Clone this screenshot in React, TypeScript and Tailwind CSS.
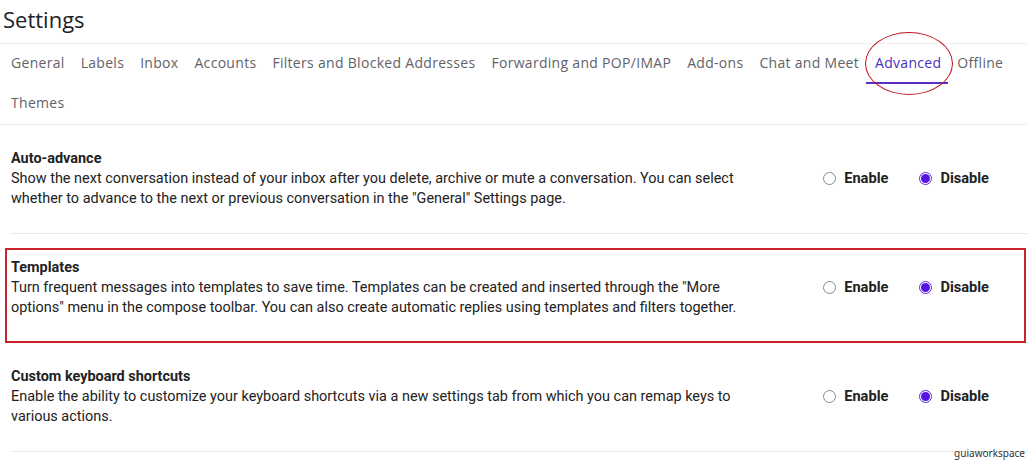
import React from "react";

const tabs = [
  "General",
  "Labels",
  "Inbox",
  "Accounts",
  "Filters and Blocked Addresses",
  "Forwarding and POP/IMAP",
  "Add-ons",
  "Chat and Meet",
  "Advanced",
  "Offline",
  "Themes",
];

function Radio({ checked }: { checked: boolean }) {
  return checked ? (
    <span className="flex h-[13px] w-[13px] items-center justify-center rounded-full border border-[#5b2bd9] bg-white">
      <span className="h-[9px] w-[9px] rounded-full bg-[#5514e0]" />
    </span>
  ) : (
    <span className="h-[13px] w-[13px] rounded-full border border-[#8a8a8a] bg-white" />
  );
}

function Options() {
  return (
    <div className="flex items-center pr-[39px] text-[14.6px] font-bold text-[#222]">
      <Radio checked={false} />
      <span className="ml-[8px]">Enable</span>
      <span className="ml-[31px]">
        <Radio checked={true} />
      </span>
      <span className="ml-[8px]">Disable</span>
    </div>
  );
}

function Section({
  title,
  lines,
  highlight,
}: {
  title: string;
  lines: string[];
  highlight?: boolean;
}) {
  return (
    <div className="relative ml-[11px] flex h-[109px] items-center justify-between border-b border-[#e6e6e6]">
      <div className="pb-[1px] text-[14.45px] leading-[20px] text-[#222]">
        <div className="font-bold">{title}</div>
        {lines.map((l) => (
          <div key={l}>{l}</div>
        ))}
      </div>
      <Options />
      {highlight && (
        <div className="pointer-events-none absolute left-[-6px] top-[14px] h-[95px] w-[1021px] border-2 border-[#c8242b]" />
      )}
    </div>
  );
}

export default function App() {
  return (
    <div
      className="relative h-[460px] w-[1028px] overflow-hidden bg-white"
      style={{ fontFamily: "Roboto, 'Liberation Sans', sans-serif" }}
    >
      <div className="h-[44px] border-b border-[#eeeeee] pl-[3px]">
        <div
          className="pt-[5px] text-[22px] leading-[28px] text-[#202124]"
          style={{ fontFamily: "'Open Sans', sans-serif" }}
        >
          Settings
        </div>
      </div>
      <div
        className="flex flex-wrap gap-x-[16px] border-b border-[#eeeeee] pl-[11px] pr-[10px] text-[14px] tracking-[0.3px] text-[#5f6368]"
        style={{ fontFamily: "'Open Sans', sans-serif" }}
      >
        {tabs.map((t) => (
          <div key={t} className="relative flex h-[40px] items-center pb-[3px]">
            {t === "Advanced" ? (
              <>
                <span className="text-[#4a2fc0]">{t}</span>
                <span className="absolute bottom-[0px] left-[-9px] right-[-7px] h-[2px] bg-[#5a30c4]" />
                <span className="absolute left-[-10px] top-[-12px] h-[63px] w-[88px] rounded-[50%] border-[1.5px] border-[#c0141c]" />
              </>
            ) : (
              <span>{t}</span>
            )}
          </div>
        ))}
      </div>
      <Section
        title="Auto-advance"
        lines={[
          "Show the next conversation instead of your inbox after you delete, archive or mute a conversation. You can select",
          'whether to advance to the next or previous conversation in the "General" Settings page.',
        ]}
      />
      <Section
        highlight
        title="Templates"
        lines={[
          'Turn frequent messages into templates to save time. Templates can be created and inserted through the "More',
          'options" menu in the compose toolbar. You can also create automatic replies using templates and filters together.',
        ]}
      />
      <Section
        title="Custom keyboard shortcuts"
        lines={[
          "Enable the ability to customize your keyboard shortcuts via a new settings tab from which you can remap keys to",
          "various actions.",
        ]}
      />
      <div
        className="absolute bottom-[-1px] right-[3px] text-[10px] text-[#333]"
        style={{ fontFamily: "'Noto Sans', sans-serif" }}
      >
        guiaworkspace
      </div>
    </div>
  );
}
